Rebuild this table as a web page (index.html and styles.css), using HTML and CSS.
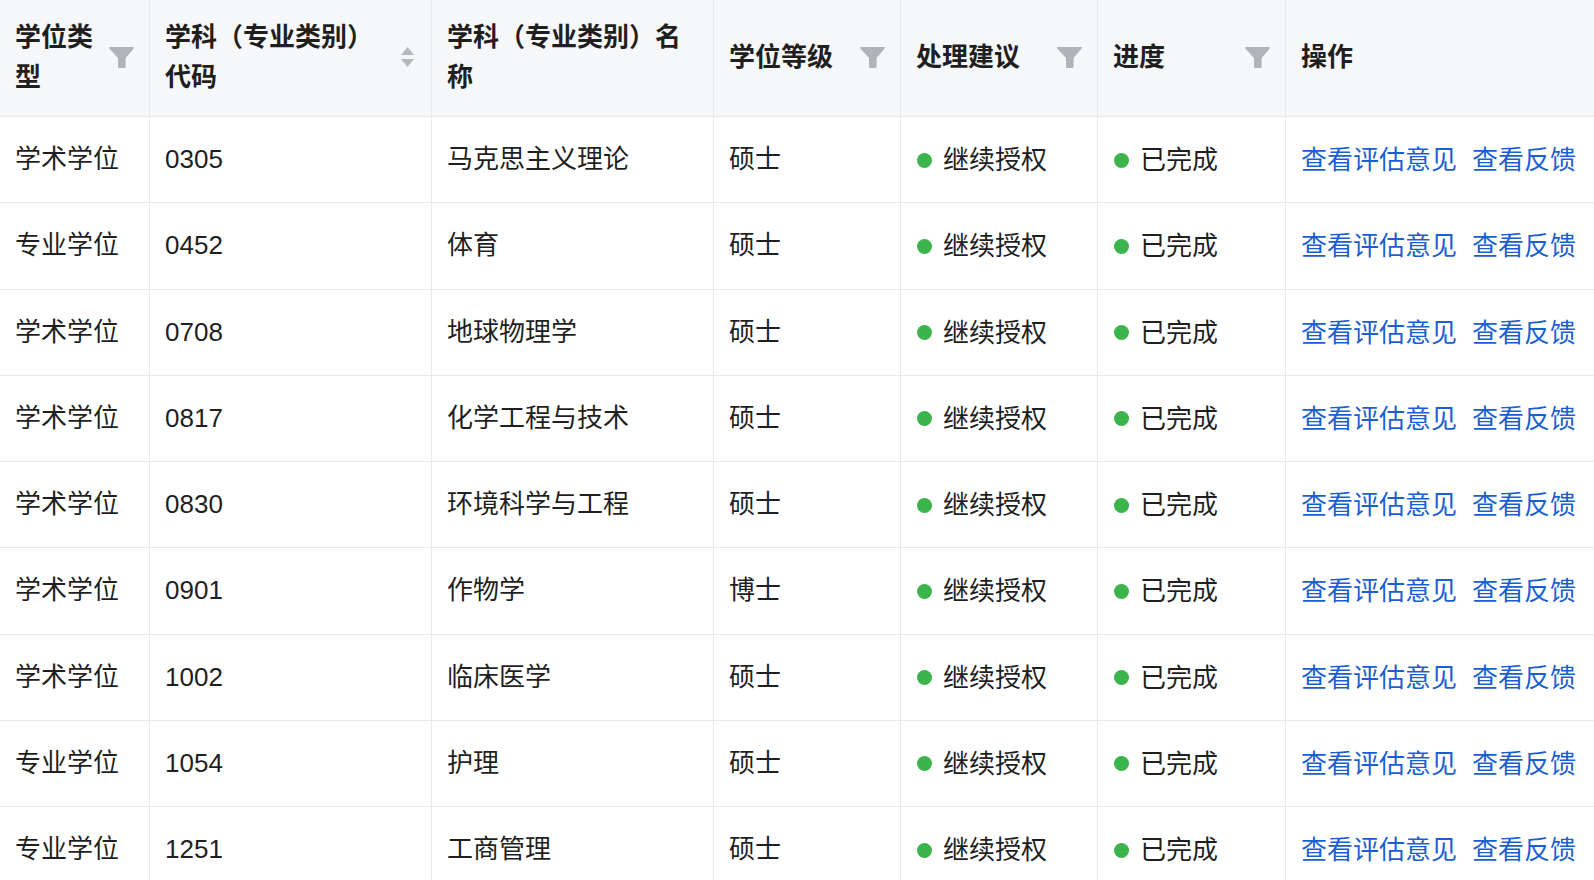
FILE: index.html
```html
<!DOCTYPE html>
<html lang="zh-CN">
<head>
<meta charset="utf-8">
<title>学位授权点评估</title>
<link rel="stylesheet" href="styles.css">
</head>
<body>
<div class="table-wrap">
<table class="data-table">
  <colgroup>
    <col class="c-type">
    <col class="c-code">
    <col class="c-name">
    <col class="c-level">
    <col class="c-advice">
    <col class="c-progress">
    <col class="c-action">
  </colgroup>
  <thead>
    <tr>
      <th><div class="th-inner"><span class="th-title">学位类型</span><span class="filter-icon"><svg viewBox="0 0 25 21" width="25" height="21"><path d="M1 0H24C24.8 0 25.2 0.8 24.7 1.4L16.6 11V19.8C16.6 20.5 16.1 21 15.4 21H10.2C9.5 21 9 20.5 9 19.8V11L0.3 1.4C-0.2 0.8 0.2 0 1 0Z"/></svg></span></div></th>
      <th><div class="th-inner"><span class="th-title">学科（专业类别）代码</span><span class="sorter-icon"><svg viewBox="0 0 13 20" width="13" height="20"><path d="M6.5 0L13 8H0Z"/><path d="M0 12H13L6.5 20Z"/></svg></span></div></th>
      <th><div class="th-inner"><span class="th-title">学科（专业类别）名称</span></div></th>
      <th><div class="th-inner"><span class="th-title">学位等级</span><span class="filter-icon"><svg viewBox="0 0 25 21" width="25" height="21"><path d="M1 0H24C24.8 0 25.2 0.8 24.7 1.4L16.6 11V19.8C16.6 20.5 16.1 21 15.4 21H10.2C9.5 21 9 20.5 9 19.8V11L0.3 1.4C-0.2 0.8 0.2 0 1 0Z"/></svg></span></div></th>
      <th><div class="th-inner"><span class="th-title">处理建议</span><span class="filter-icon"><svg viewBox="0 0 25 21" width="25" height="21"><path d="M1 0H24C24.8 0 25.2 0.8 24.7 1.4L16.6 11V19.8C16.6 20.5 16.1 21 15.4 21H10.2C9.5 21 9 20.5 9 19.8V11L0.3 1.4C-0.2 0.8 0.2 0 1 0Z"/></svg></span></div></th>
      <th><div class="th-inner"><span class="th-title">进度</span><span class="filter-icon"><svg viewBox="0 0 25 21" width="25" height="21"><path d="M1 0H24C24.8 0 25.2 0.8 24.7 1.4L16.6 11V19.8C16.6 20.5 16.1 21 15.4 21H10.2C9.5 21 9 20.5 9 19.8V11L0.3 1.4C-0.2 0.8 0.2 0 1 0Z"/></svg></span></div></th>
      <th class="last"><div class="th-inner"><span class="th-title">操作</span></div></th>
    </tr>
  </thead>
  <tbody>
    <tr><td>学术学位</td><td>0305</td><td>马克思主义理论</td><td>硕士</td><td><span class="status"><span class="dot"></span>继续授权</span></td><td><span class="status"><span class="dot"></span>已完成</span></td><td class="last"><span class="actions"><a href="#">查看评估意见</a><a href="#">查看反馈</a></span></td></tr>
    <tr><td>专业学位</td><td>0452</td><td>体育</td><td>硕士</td><td><span class="status"><span class="dot"></span>继续授权</span></td><td><span class="status"><span class="dot"></span>已完成</span></td><td class="last"><span class="actions"><a href="#">查看评估意见</a><a href="#">查看反馈</a></span></td></tr>
    <tr><td>学术学位</td><td>0708</td><td>地球物理学</td><td>硕士</td><td><span class="status"><span class="dot"></span>继续授权</span></td><td><span class="status"><span class="dot"></span>已完成</span></td><td class="last"><span class="actions"><a href="#">查看评估意见</a><a href="#">查看反馈</a></span></td></tr>
    <tr><td>学术学位</td><td>0817</td><td>化学工程与技术</td><td>硕士</td><td><span class="status"><span class="dot"></span>继续授权</span></td><td><span class="status"><span class="dot"></span>已完成</span></td><td class="last"><span class="actions"><a href="#">查看评估意见</a><a href="#">查看反馈</a></span></td></tr>
    <tr><td>学术学位</td><td>0830</td><td>环境科学与工程</td><td>硕士</td><td><span class="status"><span class="dot"></span>继续授权</span></td><td><span class="status"><span class="dot"></span>已完成</span></td><td class="last"><span class="actions"><a href="#">查看评估意见</a><a href="#">查看反馈</a></span></td></tr>
    <tr><td>学术学位</td><td>0901</td><td>作物学</td><td>博士</td><td><span class="status"><span class="dot"></span>继续授权</span></td><td><span class="status"><span class="dot"></span>已完成</span></td><td class="last"><span class="actions"><a href="#">查看评估意见</a><a href="#">查看反馈</a></span></td></tr>
    <tr><td>学术学位</td><td>1002</td><td>临床医学</td><td>硕士</td><td><span class="status"><span class="dot"></span>继续授权</span></td><td><span class="status"><span class="dot"></span>已完成</span></td><td class="last"><span class="actions"><a href="#">查看评估意见</a><a href="#">查看反馈</a></span></td></tr>
    <tr><td>专业学位</td><td>1054</td><td>护理</td><td>硕士</td><td><span class="status"><span class="dot"></span>继续授权</span></td><td><span class="status"><span class="dot"></span>已完成</span></td><td class="last"><span class="actions"><a href="#">查看评估意见</a><a href="#">查看反馈</a></span></td></tr>
    <tr><td>专业学位</td><td>1251</td><td>工商管理</td><td>硕士</td><td><span class="status"><span class="dot"></span>继续授权</span></td><td><span class="status"><span class="dot"></span>已完成</span></td><td class="last"><span class="actions"><a href="#">查看评估意见</a><a href="#">查看反馈</a></span></td></tr>
  </tbody>
</table>
</div>
</body>
</html>
```

FILE: styles.css
```css
* {
  box-sizing: border-box;
}

html, body {
  margin: 0;
  padding: 0;
  background: #ffffff;
}

body {
  font-family: "Liberation Sans", "Noto Sans CJK SC", sans-serif;
  font-size: 26px;
  color: #1f1f1f;
}

.table-wrap {
  width: 1594px;
  height: 880px;
  overflow: hidden;
}

.data-table {
  width: 1594px;
  table-layout: fixed;
  border-collapse: separate;
  border-spacing: 0;
}

.c-type { width: 150px; }
.c-code { width: 282px; }
.c-name { width: 282px; }
.c-level { width: 187px; }
.c-advice { width: 197px; }
.c-progress { width: 188px; }
.c-action { width: 308px; }

.data-table th,
.data-table td {
  border-right: 1px solid #e9e9eb;
  border-bottom: 1px solid #e9e9eb;
  text-align: left;
  vertical-align: middle;
}

.data-table th.last,
.data-table td.last {
  border-right: none;
}

.data-table th {
  background: #f6f7f9;
  font-weight: 700;
  line-height: 40px;
  padding: 16px 15px 18px 15px;
  height: 117px;
  border-bottom-color: #e6e7ea;
}

.th-inner {
  display: flex;
  align-items: center;
  justify-content: space-between;
}

.th-title {
  flex: 1 1 auto;
  min-width: 0;
}

.filter-icon {
  flex: 0 0 auto;
  display: flex;
  margin-left: 8px;
  fill: #b1b3b9;
}

.sorter-icon {
  flex: 0 0 auto;
  display: flex;
  margin-left: 10px;
  margin-right: 2px;
  fill: #b6b8bd;
}

.data-table td {
  height: 86.25px;
  line-height: 40px;
  padding: 0 15px 1px 15px;
  white-space: nowrap;
}

.status {
  display: inline-flex;
  align-items: center;
  vertical-align: middle;
}

.dot {
  width: 15px;
  height: 15px;
  border-radius: 50%;
  background: #3bb44b;
  margin-left: 1px;
  margin-right: 11px;
}

.actions {
  display: inline-flex;
  gap: 15px;
  vertical-align: middle;
}

.actions a {
  color: #1a5fd2;
  text-decoration: none;
}
```
